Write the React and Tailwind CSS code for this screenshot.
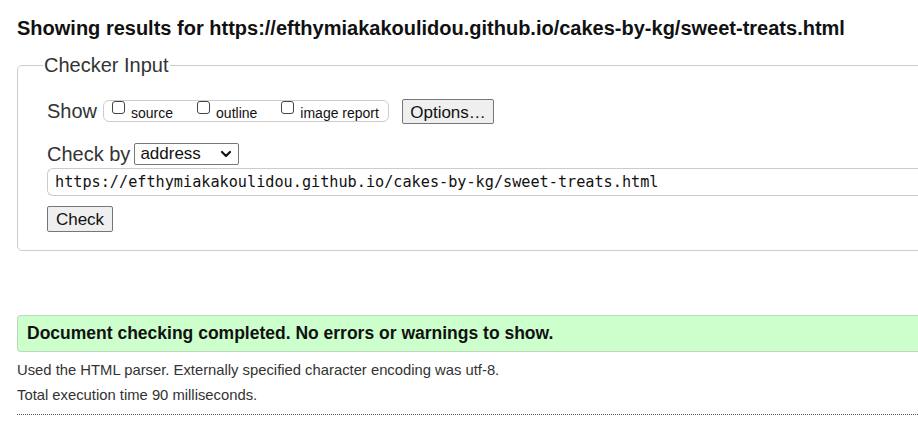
import React from "react";

const url = "https://efthymiakakoulidou.github.io/cakes-by-kg/sweet-treats.html";

const Box = ({ label }) => (
    <label className="flex items-center">
        <span className="w-[13px] h-[13px] border border-[#444] rounded-[3px] bg-white mt-[-8px]" />
        <span className="ml-[6px] text-[14px] leading-none mt-[3px]">{label}</span>
    </label>
);

export default function App() {
    return (
        <div className="w-[918px] h-[424px] overflow-hidden bg-white text-[#111] font-['Liberation_Sans',Arial,sans-serif]">
            <div className="w-[1000px] pl-[17px]">
                <h2 className="pt-[16px] text-[20px] font-bold leading-[24px]">
                    Showing results for {url}
                </h2>

                <fieldset className="mt-[13px] border border-[#ccc] rounded-[5px] pl-[29px] pt-[20px] pb-[18px]">
                    <legend className="ml-[-4px] px-[1px] text-[20px] text-[#333] leading-[24px]">Checker Input</legend>

                    <div className="flex items-center h-[26px] mt-[1px]">
                        <span className="text-[20px] text-[#333]">Show</span>
                        <div className="ml-[6px] flex items-center gap-[24px] border border-[#ccc] rounded-[6px] h-[22px] pl-[8px] w-[286px]">
                            <Box label="source" />
                            <Box label="outline" />
                            <Box label="image report" />
                        </div>
                        <button className="ml-[13px] h-[25px] w-[92px] border border-[#767676] rounded-[2px] bg-[#efefef] text-[17px] text-[#111]">
                            Options…
                        </button>
                    </div>

                    <div className="flex items-center mt-[19px] h-[22px]">
                        <span className="text-[20px] text-[#333]">Check by</span>
                        <div className="ml-[4px] w-[105px] h-[22px] border border-[#767676] rounded-[2px] flex items-center justify-between pl-[5px] pr-[6px] text-[17px]">
                            <span>address</span>
                            <svg width="12" height="8" viewBox="0 0 12 8" fill="none" stroke="#111" strokeWidth="2.2" strokeLinecap="round" strokeLinejoin="round">
                                <path d="M2 2l4 4 4-4" />
                            </svg>
                        </div>
                    </div>

                    <div className="mt-[3px] h-[28px] border border-[#ccc] border-r-0 rounded-l-[6px] flex items-center pl-[7px] font-['DejaVu_Sans_Mono',monospace] text-[15.2px] text-[#111]">
                        {url}
                    </div>

                    <button className="mt-[10px] h-[26px] w-[66px] border border-[#767676] rounded-[2px] bg-[#efefef] text-[17px] text-[#111]">
                        Check
                    </button>
                </fieldset>

                <div className="mt-[64px] h-[37px] bg-[#ccffcc] border border-[#c0d8c0] border-r-0 rounded-l-[4px] flex items-center pl-[9px] text-[17.5px] font-bold">
                    Document checking completed. No errors or warnings to show.
                </div>

                <p className="mt-[9px] text-[14.8px] text-[#333] leading-[18px]">
                    Used the HTML parser. Externally specified character encoding was utf-8.
                </p>
                <p className="mt-[7px] text-[14.8px] text-[#333] leading-[18px]">
                    Total execution time 90 milliseconds.
                </p>
                <div className="mt-[10px] border-t border-dotted border-[#555]" />
            </div>
        </div>
    );
}
